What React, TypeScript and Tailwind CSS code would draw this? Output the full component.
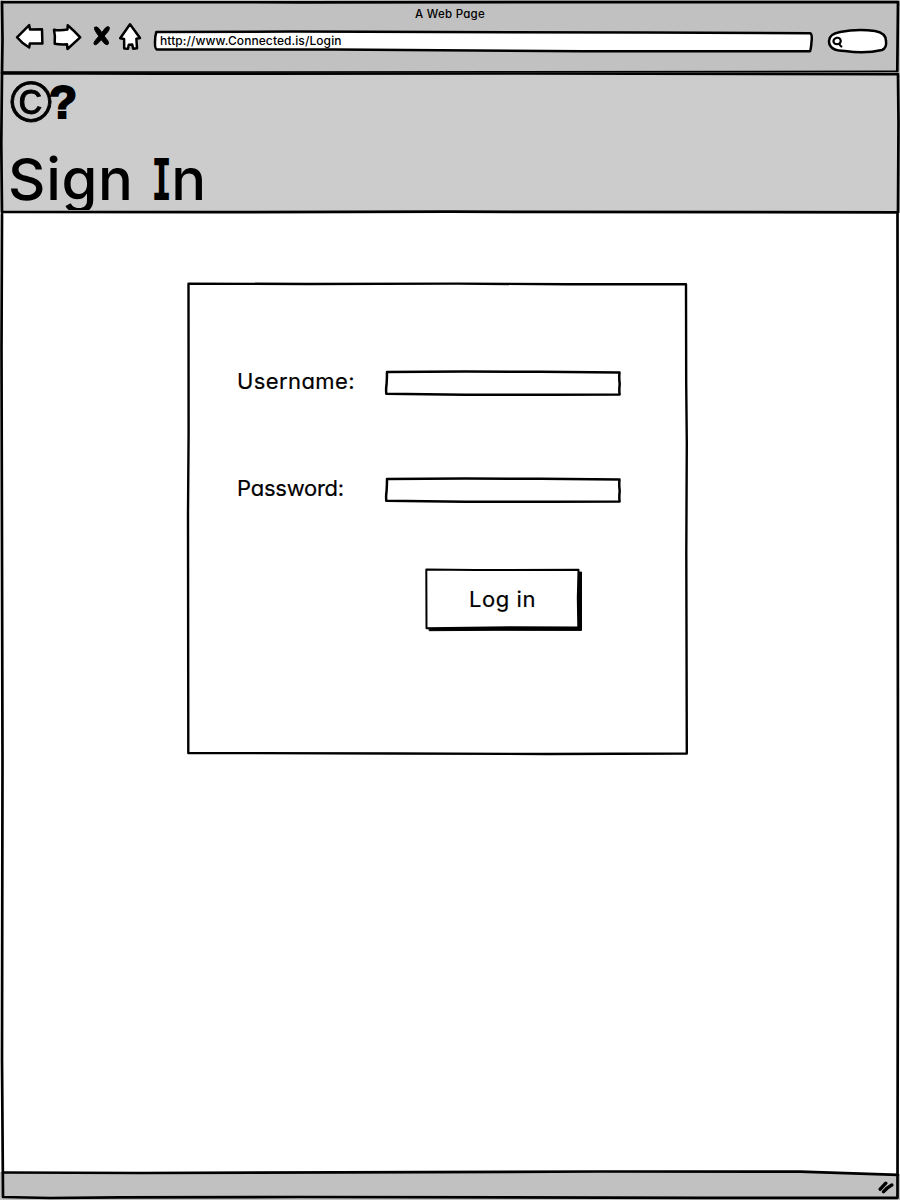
import type { ReactNode } from "react";

type SketchProps = { w: number; h: number; d: string; fill?: string; stroke?: number };

/** Hand-drawn outline laid behind the content of its box. */
function Sketch({ w, h, d, fill = "none", stroke = 2.5 }: SketchProps) {
  return (
    <svg
      aria-hidden="true"
      className="pointer-events-none absolute inset-0 overflow-visible"
      width={w}
      height={h}
      viewBox={`0 0 ${w} ${h}`}
      fill={fill}
      stroke="#000"
      strokeWidth={stroke}
      strokeLinejoin="round"
      strokeLinecap="round"
    >
      <path d={d} />
    </svg>
  );
}

function Toolbar() {
  return (
    <header className="relative h-[73px] bg-[#c1c1c1]">
      <h1 className="flex h-[27px] items-center justify-center pt-[2px] text-[11.5px] font-medium leading-none tracking-[0.25px]">A Web Page</h1>
      <div className="flex items-start">
        <svg className="-mt-[7px] ml-[12px] h-8 w-[134px] shrink-0" viewBox="12 20 134 32" fill="#fff" stroke="#000" strokeWidth="2.5" strokeLinejoin="round" strokeLinecap="round" role="img" aria-label="Navigation">
          <path d="M17 37.3 L29.2 25.2 L30 29.4 L42 29.3 L42.4 43.6 L29.8 43.6 L29.2 47.5 Q22 43.5 17 37.3Z" />
          <path d="M54 29.7 Q60 31 67.5 29.5 L67.7 25.2 Q74 30.5 80.2 37.4 L67.5 49 L67 44.3 Q60 44.7 54.7 43.7 Q55.5 36 54 29.7Z" />
          <path d="M130 24.2 L140 38 L136.4 38.8 L137 48.3 L133.2 48.7 L132.2 44.6 L128.8 44.7 L128 48.8 L124.2 48.4 L124.1 39 L120.2 38.2Z" />
          <path d="M94.6 27.3 Q97 25.8 99 28.6 L101.8 32.5 L105.5 27.8 Q108 25.6 109.4 27.4 Q109.5 30 107.7 32 L104.2 36 L107.9 40.8 Q109.5 43.8 107.6 44.7 Q105.5 45 103.5 42.6 L101.3 39.8 L97.7 43.6 Q95.3 45.6 94 44.3 Q93.4 42.5 95.4 40.2 L98.8 36.2 L95.5 31.4 Q93.8 28.5 94.6 27.3Z" fill="#000" strokeWidth="0.9" />
        </svg>
        <div className="relative ml-[8px] mt-[4px] h-[20px] w-[658px]">
          <Sketch w={658} h={20} fill="#fff" d="M2.3 1 C180 0 400 .7 490 1.5 L656 2.3 Q658.5 2.8 657.5 11 Q657 18 656 20.2 L430 20.2 L180 18.5 L3 18.4 Q.8 18 1 11 Q1 5 2.3 1Z" />
          <span className="relative block pl-[6px] pt-[4px] text-[12px] font-medium leading-[12px] tracking-[0.08px]">http://www.Connected.is/Login</span>
        </div>
        <div className="relative ml-[16px] mt-[2px] h-[24px] w-[60px]">
          <Sketch w={60} h={24} fill="#fff" d="M12 3 Q29 -.3 47 2 Q58 4 58 12 Q59 19 54 21 Q37 25 17 22 Q1 22 1 12 Q1 5 12 3Z" />
          <svg className="relative ml-[4px] mt-[7px] h-[14px] w-[12px]" viewBox="0 0 12 14" fill="none" stroke="#000" strokeWidth="2.1" strokeLinecap="round">
            <path d="M4.8 1.8 Q1.4 2.6 1.4 5.4 Q1.8 8.2 5.2 8.2 Q8.8 8 8.8 4.8 Q8.2 1.4 4.8 1.8Z M6.8 7.8 L9.4 10.6" />
          </svg>
        </div>
      </div>
    </header>
  );
}

function Banner() {
  return (
    <section className="relative h-[140px] bg-[#ccc]">
      <div className="relative h-[137px] overflow-hidden pl-[8px]">
        <div className="flex h-[75px] items-start pl-[2px]">
          <span className="mt-px w-[41px] font-['Liberation_Sans'] text-[57px] leading-[57px] [-webkit-text-stroke:0.9px_#000]">©</span>
          <span className="mt-[4px] -ml-[2px] font-['Liberation_Sans'] text-[46px] font-bold leading-[50px] [-webkit-text-stroke:2px_#000]">?</span>
        </div>
        <h2 className="whitespace-pre text-[58px] font-medium leading-[62px] tracking-[0.7px]">
          Sign <span className="-mr-[10px] ml-[3px] inline-block origin-left scale-x-[0.62] font-bold">I</span>n
        </h2>
      </div>
      <Sketch w={900} h={140} stroke={2.7} d="M2 .2 L160 .7 L520 .5 L898 1.2 L898.5 50 L898 139.4 L450 138.7 L220 139.2 L2 138.8 L1.3 70Z" />
    </section>
  );
}

function Field({ label, type, tracking }: { label: string; type: string; tracking: string }) {
  return (
    <label className="flex h-[26px] items-center">
      <span className={`w-[148px] pb-[5px] text-[22px] leading-[22px] [-webkit-text-stroke:0.2px_#000] ${tracking}`}>{label}</span>
      <span className="relative block h-[26px] w-[236px]">
        <Sketch w={236} h={26} d="M2 2 L80 1.5 L155 1.8 L234.5 2.6 Q233.9 8 234.7 14 Q234 20 234.6 24.4 L165 24.7 L80 24.7 L1.3 23.8 Q.8 19 1.6 14 Q2 8 2 2Z" />
        <input type={type} aria-label={label} className="relative block h-full w-full bg-transparent px-2 text-[16px] outline-none" />
      </span>
    </label>
  );
}

function Panel({ children }: { children: ReactNode }) {
  return (
    <form className="relative ml-[187px] mt-[70px] flex h-[472px] w-[501px] flex-col pl-[50px] pt-[87px]">
      <Sketch w={501} h={472} stroke={2.4} d="M1.5 .6 L120 1 L270 .6 L380 1.3 L499 1.3 L499.2 100 L499.8 160 L499.3 270 L499.8 470.5 L360 471 L210 470.5 L1.3 470 L1 230 L1.6 150Z" />
      {children}
    </form>
  );
}

export default function App() {
  return (
    <main className="relative flex h-[1200px] w-[900px] flex-col overflow-hidden bg-white font-[Inter,sans-serif] text-black [font-feature-settings:'cv11','cv08']">
      <Toolbar />
      <Banner />
      <div className="h-[959px]">
        <Panel>
          <Field label="Username:" type="text" tracking="tracking-[0.4px]" />
          <div className="h-[81px] shrink-0" />
          <Field label="Password:" type="password" tracking="tracking-[-0.25px]" />
          <button type="button" className="relative ml-[188px] mt-[65px] flex h-[63px] w-[157px] items-center justify-center pb-[2px] pr-[2px] text-[22px] leading-none tracking-[0.6px] [-webkit-text-stroke:0.2px_#000]">
            <Sketch w={157} h={63} fill="#000" stroke={1} d="M4.5 59 L152 57 L153 4 L156.5 4 L156.5 62.4 L70 62.3 L4.5 62.7Z" />
            <Sketch w={157} h={63} fill="#fff" stroke={2} d="M1.3 1.5 L50 2 L153.5 1.8 L152.8 30 L153.3 59.5 L85 59.2 L1.5 60.3Z" />
            <span className="relative">Log in</span>
          </button>
        </Panel>
      </div>
      <footer className="relative flex h-[28px] items-start justify-end bg-[#c1c1c1] pr-[5px]">
        <Sketch w={900} h={28} fill="#fff" stroke={0} d="M0 0 H900 V2.5 L800 0Z" />
        <svg className="relative mt-[7px] h-[15px] w-[18px]" viewBox="0 0 18 15" fill="none" stroke="#000" strokeWidth="3.4" strokeLinecap="round">
          <path d="M3.2 10.2 L8.8 4.2 M6.5 12.8 Q10 8.5 14.8 6" />
        </svg>
        <Sketch w={900} h={28} stroke={2.7} d="M3 .5 L140 1 L600 -.5 L800 -.3 L898 2.8" />
      </footer>
      <Sketch w={900} h={1200} stroke={2.7} d="M2 2 L300 2.3 L898 2 L897.3 71 M897.5 214 L898 840 L897.5 1197.8 L700 1197.8 L300 1197 L120 1197.3 L50 1198 L3 1197 L2 1060 L2.5 760 L1.5 350 L2 214 M2 73 L2.5 40 L2 2" />
      <Sketch w={900} h={1200} stroke={1.4} d="M3 72 L250 72 L897 71.3" />
    </main>
  );
}
